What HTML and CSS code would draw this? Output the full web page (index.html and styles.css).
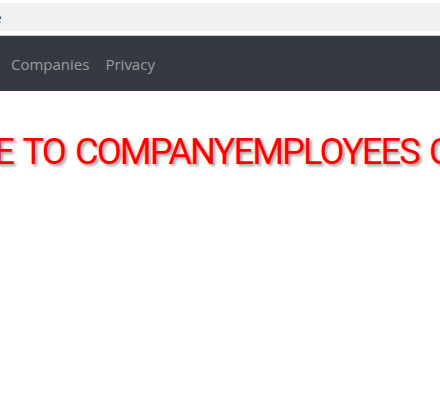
FILE: index.html
```html
<!DOCTYPE html>
<html>
<head>
<meta charset="utf-8">
<link rel="stylesheet" href="styles.css">
</head>
<body>
<div class="topbar"><span class="crumb">Home</span></div>
<nav class="navbar">
  <a class="nav-link" href="#">Companies</a>
  <a class="nav-link" href="#">Privacy</a>
</nav>
<main class="content">
  <h1 class="title">WELCOME TO COMPANYEMPLOYEES CRUD</h1>
</main>
</body>
</html>
```
FILE: styles.css
```css
html, body {
  margin: 0;
  padding: 0;
  background: #fff;
  overflow: hidden;
  font-family: "Open Sans", "Noto Sans", sans-serif;
}
.topbar {
  margin-top: 3px;
  height: 28px;
  background: #f0f1f0;
  display: flex;
  align-items: center;
  overflow: hidden;
}
.crumb {
  margin-left: -38px;
  font-size: 14px;
  color: #333;
}
.navbar {
  margin-top: 4px;
  border-top: 1px solid #c8c8c8;
  height: 55px;
  background: #343a40;
  display: flex;
  align-items: center;
  gap: 16px;
  padding-left: 11px;
}
.nav-link {
  color: #9a9da1;
  text-decoration: none;
  font-size: 15px;
}
.content {
  padding-top: 38px;
  white-space: nowrap;
  overflow: hidden;
}
.title {
  margin: 0 0 0 -146px;
  font-family: Roboto, "Open Sans", sans-serif;
  font-weight: 400;
  font-size: 36.5px;
  letter-spacing: -2px;
  word-spacing: 3px;
  color: #ff0000;
  text-shadow: 2px 2px 3px #999;
  line-height: 46px;
}
```
